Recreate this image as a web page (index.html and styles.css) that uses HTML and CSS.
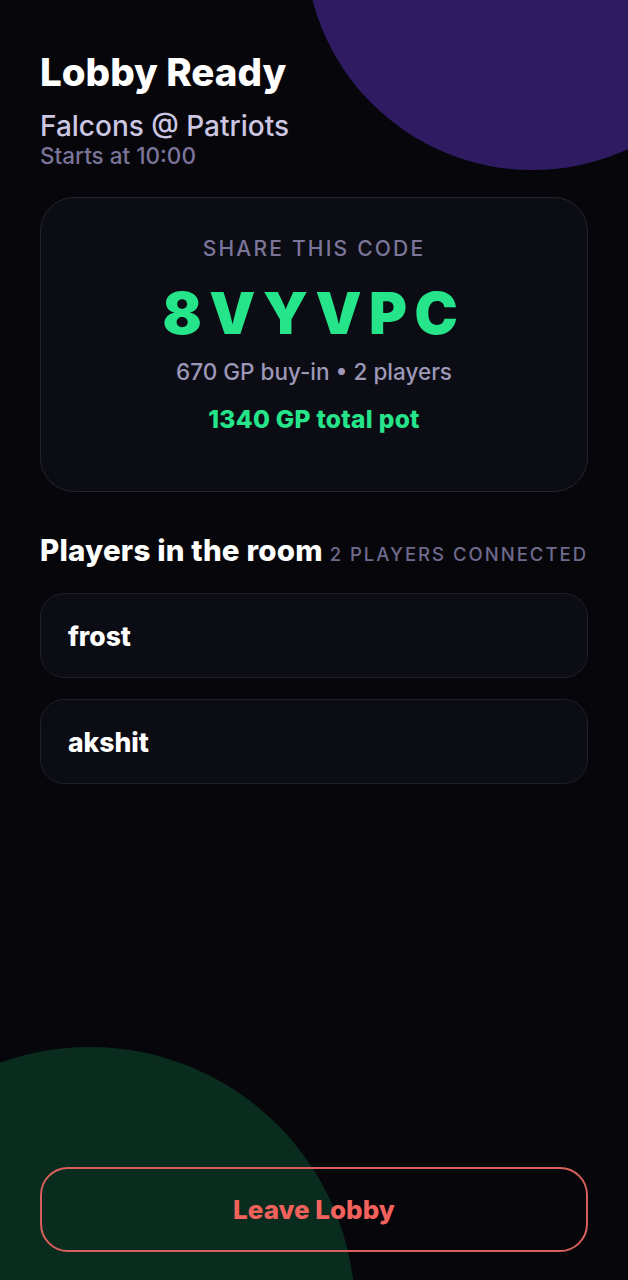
FILE: index.html
```html
<!DOCTYPE html>
<html lang="en">
<head>
<meta charset="utf-8">
<title>Lobby Ready</title>
<link rel="stylesheet" href="styles.css">
</head>
<body>
<div class="screen">
  <div class="blob blob-purple"></div>
  <div class="blob blob-green"></div>
  <main class="content">
    <header class="header">
      <h1 class="title">Lobby Ready</h1>
      <p class="matchup">Falcons @ Patriots</p>
      <p class="start">Starts at 10:00</p>
    </header>
    <section class="code-card">
      <p class="code-label">SHARE THIS CODE</p>
      <p class="code">8VYVPC</p>
      <p class="code-meta">670 GP buy-in • 2 players</p>
      <p class="code-pot">1340 GP total pot</p>
    </section>
    <section class="players">
      <div class="players-head">
        <h2 class="players-title">Players in the room</h2>
        <span class="players-count">2 PLAYERS CONNECTED</span>
      </div>
      <ul class="player-list">
        <li class="player">frost</li>
        <li class="player">akshit</li>
      </ul>
    </section>
    <button class="leave">Leave Lobby</button>
  </main>
</div>
</body>
</html>
```
FILE: styles.css
```css
* { box-sizing: border-box; }
html, body {
  margin: 0;
  padding: 0;
  background: #06060b;
}
body {
  font-family: Inter, "Noto Sans", sans-serif;
  color: #ffffff;
}
p, h1, h2 { margin: 0; }
.screen {
  position: relative;
  width: 628px;
  height: 1280px;
  overflow: hidden;
  background: #06060b;
}
.blob {
  position: absolute;
  border-radius: 50%;
  z-index: 0;
}
.blob-purple {
  width: 455px;
  height: 455px;
  left: 305px;
  top: -285px;
  background: #2e1b62;
}
.blob-green {
  width: 530px;
  height: 530px;
  left: -175px;
  top: 1047px;
  background: #0a2c1f;
}
.content {
  position: relative;
  z-index: 1;
  height: 100%;
  display: flex;
  flex-direction: column;
  padding: 50px 40px 28px;
}
.title {
  font-size: 38.5px;
  font-weight: 800;
  line-height: 44px;
  color: #ffffff;
}
.matchup {
  margin-top: 16px;
  font-size: 28px;
  line-height: 32px;
  font-weight: 500;
  color: #cbc6e2;
}
.start {
  font-size: 22.5px;
  line-height: 28px;
  font-weight: 500;
  color: #7b7499;
}
.code-card {
  margin-top: 27px;
  height: 295px;
  border-radius: 34px;
  background: #0c0d14;
  border: 1px solid #23242d;
  display: flex;
  flex-direction: column;
  align-items: center;
  padding-top: 38px;
}
.code-label {
  font-size: 21px;
  line-height: 26px;
  font-weight: 500;
  letter-spacing: 2.2px;
  color: #7b7599;
}
.code {
  margin-top: 16px;
  font-size: 58px;
  line-height: 70px;
  font-weight: 900;
  letter-spacing: 7.5px;
  color: #25e48a;
}
.code-meta {
  margin-top: 10px;
  font-size: 22.5px;
  line-height: 28px;
  font-weight: 500;
  color: #9d97b8;
}
.code-pot {
  margin-top: 18px;
  font-size: 24.5px;
  line-height: 30px;
  font-weight: 800;
  color: #25e48a;
  letter-spacing: 0.3px;
}
.players { margin-top: 41px; }
.players-head {
  display: flex;
  justify-content: space-between;
  align-items: baseline;
}
.players-title {
  font-size: 29.5px;
  line-height: 34px;
  font-weight: 800;
  letter-spacing: 0.2px;
}
.players-count {
  font-size: 18.5px;
  font-weight: 500;
  letter-spacing: 2px;
  color: #6f6a8c;
}
.player-list {
  list-style: none;
  margin: 26px 0 0;
  padding: 0;
  display: flex;
  flex-direction: column;
  gap: 21px;
}
.player {
  height: 85px;
  display: flex;
  align-items: center;
  padding-left: 27px;
  border-radius: 24px;
  background: #0c0d14;
  border: 1px solid #1e1f28;
  font-size: 26.5px;
  font-weight: 800;
}
.leave {
  margin-top: auto;
  height: 85px;
  border-radius: 28px;
  border: 2px solid #d8605c;
  background: transparent;
  font-family: Inter, "Noto Sans", sans-serif;
  font-size: 26px;
  font-weight: 800;
  color: #f2625c;
}
```
